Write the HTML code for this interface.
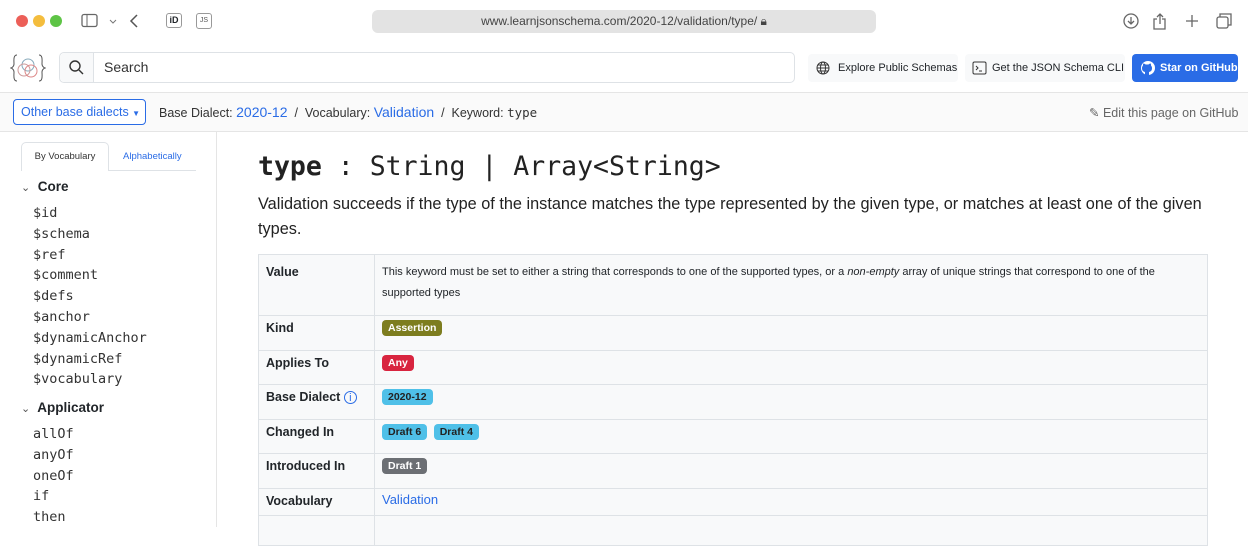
<!DOCTYPE html>
<html><head><meta charset="utf-8"><style>
*{box-sizing:border-box;margin:0;padding:0}
body{width:1248px;height:527px;overflow:hidden;background:#fff;font-family:"Liberation Sans",sans-serif;color:#212529;position:relative}
.abs{position:absolute}
.mono{font-family:"DejaVu Sans Mono","Liberation Mono",monospace}
.dot{width:12px;height:12px;border-radius:50%;top:15px}
.btn{background:#f8f9fa;border-radius:4px;font-size:11px;color:#212529;display:flex;align-items:center;height:28px;top:54px;white-space:nowrap}
.side{font-size:13.5px;color:#333;left:33px;line-height:20.8px}
td{border:1px solid #dee2e6;vertical-align:top;padding:0 7px}
.lab{font-weight:bold;font-size:12.5px;padding-top:5px}
.badge{display:inline-block;font-size:10.5px;font-weight:bold;border-radius:4px;padding:2px 6px;margin-top:4px;margin-right:2px}
</style></head><body>
<!-- safari bar -->
<div class="abs dot" style="left:16px;background:#ec5f58"></div>
<div class="abs dot" style="left:33px;background:#f4bd3d"></div>
<div class="abs dot" style="left:50px;background:#5ec446"></div>
<svg class="abs" style="left:80px;top:13px" width="60" height="16"><rect x="2" y="1.5" width="15" height="12" rx="2" fill="none" stroke="#666" stroke-width="1.3"/><line x1="7" y1="2" x2="7" y2="13" stroke="#666"/><path d="M30 7l3 3 3-3" fill="none" stroke="#777"/><path d="M57 2l-6 6 6 6" fill="none" stroke="#555" stroke-width="1.5"/></svg>
<div class="abs" style="left:166px;top:13px;width:16px;height:15px;border:1px solid #999;border-radius:3px;font-size:9px;font-weight:bold;text-align:center;line-height:13px">iD</div>
<div class="abs" style="left:196px;top:13px;width:16px;height:16px;border:1px solid #999;border-radius:3px;font-size:7px;text-align:center;line-height:14px;color:#555">JS</div>
<div class="abs" style="left:372px;top:10px;width:504px;height:23px;background:#e3e3e3;border-radius:6px;font-size:12px;color:#444;text-align:center;line-height:23px">www.learnjsonschema.com/2020-12/validation/type/ &#x1F512;&#xFE0E;</div>
<svg class="abs" style="left:1120px;top:11px" width="115" height="20" fill="none" stroke="#666" stroke-width="1.3"><circle cx="11" cy="10" r="7"/><path d="M11 6v7M8 10l3 3 3-3"/><path d="M37 8h-3v10h11V8h-3M40 3v10M37 6l3-3 3 3"/><path d="M72 4v12M66 10h12"/><rect x="97" y="6" width="11" height="11" rx="2"/><path d="M100 6V3h11v11h-3"/></svg>
<!-- header -->
<svg class="abs" style="left:10px;top:53px" width="36" height="30" fill="none"><path d="M7 2c-4 0-3 6-3 9s-3 4-3 4 3 1 3 4-1 9 3 9M29 2c4 0 3 6 3 9s3 4 3 4-3 1-3 4 1 9-3 9" stroke="#555"/><circle cx="18" cy="12" r="6" stroke="#8ab"/><circle cx="14" cy="17" r="6" stroke="#c99"/><circle cx="21" cy="18" r="6" stroke="#d88"/></svg>
<div class="abs" style="left:59px;top:52px;width:736px;height:31px;border:1px solid #dee2e6;border-radius:5px;display:flex">
<div style="width:34px;background:#f8f9fa;border-right:1px solid #dee2e6;border-radius:5px 0 0 5px"><svg width="34" height="29" fill="none" stroke="#333" stroke-width="1.4"><circle cx="15" cy="13" r="5"/><path d="M19 17l4 4"/></svg></div>
<div style="font-size:14px;color:#333;line-height:29px;padding-left:10px">Search</div></div>
<div class="abs btn" style="left:808px;width:150px"><svg width="30" height="16" fill="none" stroke="#333"><circle cx="15" cy="8" r="6"/><ellipse cx="15" cy="8" rx="2.5" ry="6"/><path d="M9 8h12M10 5h10M10 11h10"/></svg>Explore Public Schemas</div>
<div class="abs btn" style="left:965px;width:160px"><svg width="27" height="16" fill="none" stroke="#333"><rect x="8" y="2" width="13" height="12" rx="1.5"/><path d="M11 6l2 2-2 2M14 11h3"/></svg>Get the JSON Schema CLI</div>
<div class="abs btn" style="left:1132px;width:106px;background:#2a6ce6;color:#fff;font-weight:bold;font-size:11px"><svg width="28" height="16"><circle cx="16" cy="8" r="7" fill="#fff"/><path d="M13 15v-3c-2-.5-3-1.5-3-4 0-1 .5-2 1-2.5 0-1 0-1.5.3-2 1 0 2 .6 2.2 1h3c.5-.4 1-1 2.2-1 .3.5.3 1 .3 2 .5.5 1 1.5 1 2.5 0 2.5-1 3.5-3 4v3z" fill="#2a6ce6"/></svg>Star on GitHub</div>
<!-- breadcrumb -->
<div class="abs" style="left:0;top:92px;width:1248px;height:40px;background:#fafafa;border-top:1px solid #e5e5e5;border-bottom:1px solid #e5e5e5"></div>
<div class="abs" style="left:13px;top:99px;width:133px;height:26px;border:1px solid #2a6ce6;border-radius:4px;color:#2a6ce6;font-size:12.5px;line-height:24px;padding-left:7px;background:#fff">Other base dialects <span style="font-size:8px">&#9660;</span></div>
<div class="abs" style="left:159px;top:104px;font-size:12.5px;color:#333">Base Dialect: <span style="color:#2a6ce6;font-size:14px">2020-12</span> &nbsp;/&nbsp; Vocabulary: <span style="color:#2a6ce6;font-size:14px">Validation</span> &nbsp;/&nbsp; Keyword: <span class="mono" style="font-size:12.5px">type</span></div>
<div class="abs" style="left:1089px;top:105px;font-size:12.5px;color:#666">&#9998; Edit this page on GitHub</div>
<!-- sidebar -->
<div class="abs" style="left:216px;top:132px;width:1px;height:395px;background:#e5e5e5"></div>
<div class="abs" style="left:21px;top:142px;width:88px;height:29px;border:1px solid #dee2e6;border-bottom:none;border-radius:5px 5px 0 0;font-size:9.5px;text-align:center;line-height:27px;color:#333">By Vocabulary</div>
<div class="abs" style="left:109px;top:170px;width:87px;height:1px;background:#dee2e6"></div>
<div class="abs" style="left:123px;top:151px;font-size:9.5px;color:#2a6ce6">Alphabetically</div>
<div class="abs" style="left:21px;top:179px;font-size:13.5px;font-weight:bold"><span style="font-weight:normal;color:#555;font-size:11px">&#8964;</span>&nbsp; Core</div>
<div class="abs side mono" style="top:203px">$id<br>$schema<br>$ref<br>$comment<br>$defs<br>$anchor<br>$dynamicAnchor<br>$dynamicRef<br>$vocabulary</div>
<div class="abs" style="left:21px;top:400px;font-size:13.5px;font-weight:bold"><span style="font-weight:normal;color:#555;font-size:11px">&#8964;</span>&nbsp; Applicator</div>
<div class="abs side mono" style="top:424px">allOf<br>anyOf<br>oneOf<br>if<br>then</div>
<!-- content -->
<div class="abs mono" style="left:258px;top:151px;font-size:26.5px;color:#222;white-space:nowrap"><b>type</b> : String | Array&lt;String&gt;</div>
<div class="abs" style="left:258px;top:192px;width:960px;font-size:16.3px;line-height:25px;color:#222">Validation succeeds if the type of the instance matches the type represented by the given type, or matches at least one of the given types.</div>
<table class="abs" style="left:258px;top:254px;width:950px;border-collapse:collapse;background:#f8f9fa">
<tr style="height:61px"><td class="lab" style="width:116px;padding-top:10px">Value</td><td style="font-size:11px;line-height:21px;padding-top:7px">This keyword must be set to either a string that corresponds to one of the supported types, or a <i>non-empty</i> array of unique strings that correspond to one of the supported types</td></tr>
<tr style="height:35px"><td class="lab">Kind</td><td><span class="badge" style="background:#7d7d1f;color:#fff">Assertion</span></td></tr>
<tr style="height:34px"><td class="lab">Applies To</td><td><span class="badge" style="background:#d8243f;color:#fff">Any</span></td></tr>
<tr style="height:35px"><td class="lab">Base Dialect <span style="color:#2a6ce6;font-weight:normal;font-size:11px;border:1px solid #2a6ce6;border-radius:50%;display:inline-block;width:13px;height:13px;text-align:center;line-height:12px">i</span></td><td><span class="badge" style="background:#4fc0e8;color:#222">2020-12</span></td></tr>
<tr style="height:34px"><td class="lab">Changed In</td><td><span class="badge" style="background:#4fc0e8;color:#222">Draft 6</span> <span class="badge" style="background:#4fc0e8;color:#222">Draft 4</span></td></tr>
<tr style="height:35px"><td class="lab">Introduced In</td><td><span class="badge" style="background:#6c6f74;color:#fff">Draft 1</span></td></tr>
<tr style="height:27px"><td class="lab">Vocabulary</td><td style="color:#2a6ce6;font-size:13px;padding-top:3px">Validation</td></tr>
<tr style="height:30px"><td></td><td></td></tr>
</table>
</body></html>
